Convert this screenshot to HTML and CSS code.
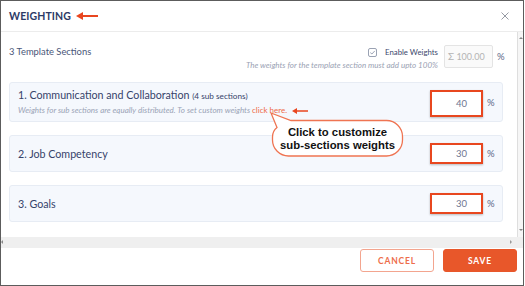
FILE: index.html
```html
<!DOCTYPE html>
<html lang="en">
<head>
  <meta charset="UTF-8" />
  <title>Weighting</title>
  <link rel="stylesheet" href="styles.css">
</head>
<body>

  <div class="modal">
    <header class="modal-header">
      <h3 class="modal-title">WEIGHTING</h3>
      <svg class="pointer" width="22" height="8" viewBox="0 0 22 8"><path d="M0 4 L7 0 L7 3 L22 3 L22 5 L7 5 L7 8 Z" fill="#e9461f"/></svg>
      <div class="close">
        <svg width="8" height="8" viewBox="0 0 8 8"><path d="M0.5 0.5 L7.5 7.5 M7.5 0.5 L0.5 7.5" stroke="#8a8f99" stroke-width="0.9"/></svg>
      </div>
    </header>

    <div class="scroll-area">
      <div class="content">
        <div class="template-head">
          <div class="template-count">3 Template Sections</div>
          <div class="weights-info">
            <div class="enable">
              <svg width="9" height="9" viewBox="0 0 9 9"><rect x="0.5" y="0.5" width="8" height="8" rx="1.5" fill="none" stroke="#8e97aa" stroke-width="0.9"/><path d="M2.3 4.6 L3.9 6 L6.8 2.9" fill="none" stroke="#8e97aa" stroke-width="0.9"/></svg>
              <span>Enable Weights</span>
            </div>
            <div class="hint">The weights for the template section must add upto 100%</div>
          </div>
          <div class="total-box"><span class="sigma">&Sigma;</span> 100.00</div>
          <span class="pct">%</span>
        </div>

        <div class="sections">
          <div class="card first">
            <div class="card-text">
              <div class="card-title">1. Communication and Collaboration <small>(4 sub sections)</small></div>
              <div class="card-sub">Weights for sub sections are equally distributed. To set custom weights <a class="link">click here.</a>
                <svg class="pointer small" width="16" height="6" viewBox="0 0 16 6"><path d="M0 3 L5 0 L5 2.2 L16 2.2 L16 3.8 L5 3.8 L5 6 Z" fill="#e9461f"/></svg>
              </div>
            </div>
            <div class="weight-input tall">40</div>
            <span class="pct">%</span>
          </div>
          <div class="card">
            <div class="card-text">
              <div class="card-title">2. Job Competency</div>
            </div>
            <div class="weight-input">30</div>
            <span class="pct">%</span>
          </div>
          <div class="card">
            <div class="card-text">
              <div class="card-title">3. Goals</div>
            </div>
            <div class="weight-input">30</div>
            <span class="pct">%</span>
          </div>
        </div>

        <!-- annotation bubble -->
        <div class="callout">
          <svg width="137" height="50" viewBox="0 0 137 50"><path d="M2 3 L22 10.5 H117.5 A16 16 0 0 1 133.5 26.5 V30 A16 16 0 0 1 117.5 46 H19.5 A16 16 0 0 1 3.5 30 V27 Q3.5 21 8 17.5 Z" fill="#fff" stroke="#ef7452" stroke-width="1.3"/></svg>
          <div class="callout-text">Click to customize<br>sub-sections weights</div>
        </div>
      </div>
      <div class="vscroll">
        <span class="arrow-up"></span>
        <span class="arrow-down"></span>
      </div>
    </div>
    <div class="hscroll">
      <span class="arrow-left"></span>
      <span class="arrow-right"></span>
    </div>

    <footer class="modal-footer">
      <button class="btn cancel">CANCEL</button>
      <button class="btn save">SAVE</button>
    </footer>
  </div>

</body>
</html>
```

FILE: styles.css
```css
body {
  margin: 0;
  font-family: 'Lato', sans-serif;
  background: #fff;
}
.modal {
  width: 524px;
  height: 286px;
  box-sizing: border-box;
  border: 1px solid #5c5c5c;
  display: flex;
  flex-direction: column;
  background: #fff;
  overflow: hidden;
}
.modal-header {
  height: 30px;
  flex-shrink: 0;
  display: flex;
  align-items: center;
  padding: 0 8px;
  border-bottom: 1px solid #ececec;
}
.modal-title {
  margin: 0;
  font-size: 10.5px;
  font-weight: 700;
  letter-spacing: 0.1px;
  color: #2c3a66;
}
.pointer {
  margin-left: 5px;
  display: block;
}
.pointer.small {
  display: inline-block;
  margin-left: 3px;
  vertical-align: middle;
}
.close {
  margin-left: auto;
  margin-right: 6px;
  display: flex;
}
.scroll-area {
  flex: 1;
  display: flex;
  min-height: 0;
  overflow: hidden;
}
.content {
  flex: 1;
  position: relative;
  padding: 13px 14px 0 8px;
}
.vscroll {
  width: 5px;
  border-left: 1px solid #dedede;
  background: #f6f6f6;
  position: relative;
}
.arrow-up, .arrow-down {
  position: absolute;
  left: 1px;
  width: 0;
  height: 0;
  border-left: 2px solid transparent;
  border-right: 2px solid transparent;
}
.arrow-up {
  top: 5px;
  border-bottom: 2px solid #888;
}
.arrow-down {
  bottom: 6px;
  border-top: 2px solid #888;
}
.hscroll {
  height: 11px;
  flex-shrink: 0;
  background: #efefef;
  position: relative;
}
.arrow-left, .arrow-right {
  position: absolute;
  top: 3px;
  width: 0;
  height: 0;
  border-top: 2px solid transparent;
  border-bottom: 2px solid transparent;
}
.arrow-left {
  left: 0;
  border-right: 2px solid #888;
}
.arrow-right {
  right: 11px;
  border-left: 2px solid #999;
}
.template-head {
  display: flex;
  align-items: flex-start;
}
.template-count {
  font-size: 9.4px;
  line-height: 14px;
  color: #4a5678;
}
.weights-info {
  margin-left: auto;
  display: flex;
  flex-direction: column;
  align-items: flex-end;
}
.enable {
  display: flex;
  align-items: center;
  gap: 8px;
  font-size: 7.8px;
  line-height: 14px;
  color: #3c486c;
}
.hint {
  font-size: 8px;
  font-style: italic;
  line-height: 13px;
  color: #9aa2b3;
}
.total-box {
  width: 49px;
  height: 23px;
  box-sizing: border-box;
  margin-left: 6px;
  border: 1px solid #e4e4e4;
  border-radius: 2px;
  background: #fafafa;
  font-size: 9px;
  line-height: 21px;
  color: #b4b4b4;
  padding-left: 3px;
}
.sigma {
  font-size: 10px;
}
.template-head .pct {
  line-height: 23px;
  margin-left: 4px;
  width: 6px;
}
.pct {
  font-size: 9.5px;
  color: #5a6688;
  margin-left: 4px;
  width: 8px;
}
.sections {
  margin-top: 10px;
  display: flex;
  flex-direction: column;
  gap: 13px;
}
.card {
  min-height: 37px;
  box-sizing: border-box;
  display: flex;
  align-items: center;
  padding: 4px 7px 4px 8px;
  background: #f5f8fd;
  border: 1px solid #e7ecf4;
  border-radius: 3px;
}
.card-text {
  flex: 1;
}
.card-title {
  font-size: 10.7px;
  line-height: 16px;
  color: #36436a;
}
.card-title small {
  font-size: 8.2px;
}
.card-sub {
  font-size: 8px;
  font-style: italic;
  line-height: 13px;
  color: #9aa3b6;
}
.link {
  color: #ef6a48;
  font-style: normal;
}
.weight-input {
  width: 53px;
  height: 21px;
  box-sizing: border-box;
  border: 2px solid #e8471f;
  background: #fff;
  text-align: right;
  padding-right: 14px;
  font-size: 9.5px;
  line-height: 17px;
  color: #6d7590;
  box-shadow: 0 1px 2px rgba(0, 0, 0, 0.25);
}
.weight-input.tall {
  height: 27px;
  line-height: 23px;
  margin-top: 2px;
}
.callout {
  position: absolute;
  left: 268px;
  top: 78px;
  width: 137px;
  height: 50px;
}
.callout svg {
  display: block;
}
.callout-text {
  position: absolute;
  left: 3px;
  right: 3px;
  top: 11px;
  height: 35px;
  display: flex;
  align-items: center;
  justify-content: center;
  text-align: center;
  font-family: 'Liberation Sans', Arial, sans-serif;
  font-weight: 700;
  font-size: 11.3px;
  line-height: 13px;
  color: #111;
}
.modal-footer {
  height: 37px;
  flex-shrink: 0;
  display: flex;
  justify-content: flex-end;
  align-items: flex-start;
  gap: 9px;
  padding: 1px 6px 0 0;
  box-sizing: border-box;
}
.btn {
  height: 23px;
  width: 74px;
  border-radius: 3px;
  font-family: 'Lato', sans-serif;
  font-size: 8.5px;
  font-weight: 700;
  letter-spacing: 0.8px;
  cursor: pointer;
}
.cancel {
  background: #fff;
  border: 1px solid #f3a58f;
  color: #ee6d4b;
}
.save {
  background: #e8572a;
  border: 1px solid #e8572a;
  color: #fff;
}
```
